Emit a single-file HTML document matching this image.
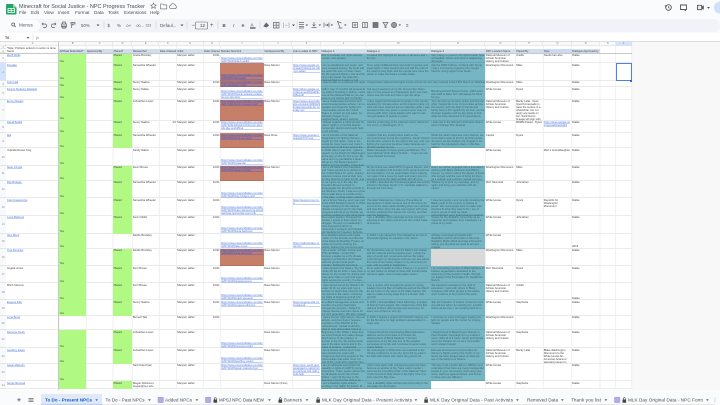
<!DOCTYPE html>
<html><head><meta charset="utf-8"><title>Minecraft for Social Justice - NPC Progress Tracker</title>
<style>
html,body{margin:0;padding:0;width:720px;height:405px;overflow:hidden;background:#f9fbfd;font-family:"Liberation Sans",sans-serif}
body{filter:blur(.3px)}
#sheet{position:absolute;left:0;top:42px;width:632px;height:348px;background:#fff}
#right{position:absolute;left:632px;top:42px;width:88px;height:348px;background:#f8f8f8}
#form{position:absolute;left:0;top:33px;width:720px;height:9px;background:#fff;border-bottom:.5px solid #ddd;box-sizing:border-box}
.r{position:absolute;left:0;width:631.7px;display:grid;grid-template-rows:100%;grid-template-columns:6.3px 52.7px 27.3px 26.7px 19.3px 27px 17.4px 27px 16.6px 43.4px 28.6px 28.7px 45.3px 64.4px 54.6px 30.4px 27.6px 28.4px 28.3px 15.7px 16px;box-shadow:inset 0 -1px 0 #eaeaea;font-size:2.7px;line-height:3px;color:#444}
.r>div{grid-row:1;overflow:hidden;padding:.6px .6px 0;box-sizing:border-box;height:100%;min-width:0}
.n{grid-column:1;text-align:center;color:#888;background:#f8f9fa;display:flex;align-items:center;justify-content:center;box-shadow:inset 0 -1px 0 #e4e4e4}
.A{grid-column:2}.B{grid-column:3}.C{grid-column:4}.D{grid-column:5}.E{grid-column:6}.F{grid-column:7;text-align:right}.G{grid-column:8}.H{grid-column:9;text-align:right}.I{grid-column:10}.J{grid-column:11}.K{grid-column:12}.L{grid-column:13}.M{grid-column:14}.N{grid-column:15}.O{grid-column:16}.P{grid-column:17}.Q{grid-column:18}.R{grid-column:19}.S{grid-column:20}.T{grid-column:21}
.g{background:#b0fa83}.t{background:#76b6c4;box-shadow:inset 0 -1px 0 rgba(40,90,100,.18)}.o{background:#c67f68;box-shadow:inset 0 -1px 0 rgba(90,50,30,.15)}.x{background:#d9d9d9}
.e{display:flex;align-items:flex-end;padding-bottom:.6px!important}
a{color:#4f78d8;text-decoration:none;word-break:break-all;background:repeating-linear-gradient(transparent 0,transparent 2.1px,rgba(110,140,225,.4) 2.1px,rgba(110,140,225,.4) 3px)}
.I a,.K a{display:block}
.o a{background:repeating-linear-gradient(rgba(125,115,195,.25) 0,rgba(125,115,195,.25) 2.1px,rgba(90,90,190,.45) 2.1px,rgba(90,90,190,.45) 3px);color:#3f55b5}
.t{color:#3c626b}
.l1,.l2,.l3,.l4,.l5,.l6{display:-webkit-box;-webkit-box-orient:vertical}
.l1{-webkit-line-clamp:1}.l2{-webkit-line-clamp:2}.l3{-webkit-line-clamp:3}.l4{-webkit-line-clamp:4}.l5{-webkit-line-clamp:5}.l6{-webkit-line-clamp:6}
.h{background:#cfdfee;display:flex;align-items:center;white-space:nowrap}
#cl{position:absolute;left:0;top:0;width:631.7px;height:4px;display:grid;grid-template-columns:6.3px 52.7px 27.3px 26.7px 19.3px 27px 17.4px 27px 16.6px 43.4px 28.6px 28.7px 45.3px 64.4px 54.6px 30.4px 27.6px 28.4px 28.3px 15.7px 16px;background:#f8f9fa;font-size:2.6px;line-height:4px;text-align:center;color:#777;box-shadow:inset 0 -.6px 0 #ddd}
#cl span{box-shadow:inset -.5px 0 0 #ddd}
#sel{position:absolute;left:615.7px;top:63.3px;width:16px;height:17.4px;border:.8px solid #4a80e8;box-sizing:border-box}
#hand{position:absolute;left:630.2px;top:79.6px;width:2.2px;height:2.2px;background:#2f63d8}
#fc{position:absolute;left:58.2px;top:42px;width:1px;height:348px;background:#c8c8c8}
#fr{position:absolute;left:0;top:52.9px;width:632px;height:1px;background:#c8c8c8}
svg{position:absolute;left:0;top:0}
#tabs{position:absolute;left:0;top:390px;width:720px;height:15px;background:#f9fbfd}
</style></head><body>
<div id="form"></div>
<div id="sheet"></div>
<div id="right"></div>
<svg width="720" height="405" style="top:0;z-index:1" fill="none"><path stroke="#ececec" stroke-width=".8" d="M59 46V390M86.3 46V390M113 46V390M132.3 46V390M159.3 46V390M176.7 46V390M203.7 46V390M220.3 46V390M263.7 46V390M292.3 46V390M321 46V390M366.3 46V390M430.7 46V390M485.3 46V390M515.7 46V390M543.3 46V390M571.7 46V390M600 46V390M615.7 46V390M631.7 42V390"/></svg>
<div style="position:absolute;left:0;top:42px;z-index:2;width:632px;height:4px"><div id="cl"><span></span><span>A</span><span>B</span><span>C</span><span>D</span><span>E</span><span>F</span><span>G</span><span>H</span><span>I</span><span>J</span><span>K</span><span>L</span><span>M</span><span>N</span><span>O</span><span>P</span><span>Q</span><span>R</span><span>S</span><span style="background:#d3e3fd">T</span></div></div>
<div style="position:absolute;left:0;top:0;z-index:2;width:632px;height:405px">
<div class="r" style="top:46px;height:3.3px;box-shadow:none"><div class="n">1</div><div class="A" style="white-space:nowrap">*Note: Problem actively no action is done</div></div>
<div class="r" style="top:49.3px;height:4px;box-shadow:none"><div class="n">2</div><div class="A">Name</div><div class="B h">All Data Submitted?</div><div class="C h">Approved By</div><div class="D h">Placed?</div><div class="E h">Researcher</div><div class="F h" style="text-align:left">Date Claimed</div><div class="G h">Artist</div><div class="H h" style="text-align:left">Date Claimed</div><div class="I h">Skindex Mod link</div><div class="J h">Vet/Approved By</div><div class="K h">Link to adapt to NPC</div><div class="L h">Dialogue 1</div><div class="M h">Dialogue 2</div><div class="N h">Dialogue 3</div><div class="O h">NPC Location Name</div><div class="P h">Placed By</div><div class="Q h" style="background:#c9daf8">Note</div><div class="R h">Dialogue Approved by</div></div>

<div class="r" style="top:53.3px;height:10px"><div class="n">3</div><div class="A"><a>Ida B Wells</a></div><div class="B g e">Yes</div><div class="D g">Placed</div><div class="E">Gretta Brockley</div><div class="G">Maryam Hafez</div><div class="H">10/21</div><div class="I e"><a>https://www.minecraftskins.com/skin/20711045/ida-b-wells/</a></div><div class="L t l2">She is [unclear] civil rights activist, mentor, and speaker.</div><div class="M t l1">I created first highlight for women in all lanes and in the city.</div><div class="N t l2">Very happy to present civil rights leader here at Freedom Center and what is happening at all people.</div><div class="O">National Museum of African American History and Culture</div><div class="P">Ariella</div><div class="Q">Needs hair also</div><div class="R">Dallas</div></div>

<div class="r" style="top:63.3px;height:17.4px"><div class="n" style="background:#d3e3fd">4</div><div class="A"><a>Douglas</a></div><div class="B g e">Yes</div><div class="D g">Placed</div><div class="E">Samantha Wheeler</div><div class="G">Maryam Hafez</div><div class="H"></div><div class="I o e"><a>https://www.minecraftskins.com/skin/20645213/douglas/</a></div><div class="J">Dave Mercer</div><div class="K"><a>https://www.google.com/search/dougl-as-mlk-npc-adapt</a></div><div class="L t l5">I am an abolitionist and orator, and once escaped slavery. My book told the world the story of what I lived. My life spanned slavery, war and the long road ahead. We walk this National Mall for freedom of all people in this land of ours and we stand.</div><div class="M t l4">From early childhood there was belief in justice and equal rights. I have fought hard and told the truth of the nation's long fight, and the people here have the power to make the dream a reality today.</div><div class="N t l3">Ask the 1960 hotlines, involved with Young of all a community organizer who fought hard for voting rights in the South.</div><div class="O">Washington Monument</div><div class="P">Miles</div><div class="R">Dallas</div></div>

<div class="r" style="top:80.7px;height:6.6px"><div class="n">5</div><div class="A"><a>John Hall</a></div><div class="B g e">Yes</div><div class="D g">Placed</div><div class="E">Sunny Nadine</div><div class="G">Maryam Hafez</div><div class="H">10/21</div><div class="I o"><a>https://www.minecraftskins.com/skin/20711045/john-hall/</a></div><div class="J">Dave Mercer</div><div class="L t" style="white-space:nowrap">I was founder of a national civil rights group in the South.</div><div class="M t" style="white-space:nowrap">I helped start national civil rights events across the South during the 1960s and we.</div><div class="N t" style="white-space:nowrap">I was involved in the 1963 March on Washington for Jobs.</div><div class="O">Washington Monument</div><div class="P">Miles</div><div class="R">Dallas</div></div>

<div class="r" style="top:87.3px;height:12.4px"><div class="n">6</div><div class="A"><a>Fannie Stokeley Edwards</a></div><div class="B g e">Yes</div><div class="D g">Placed</div><div class="E">Sunny Dallas</div><div class="G">Maryam Hafez</div><div class="H"></div><div class="I e"><a>https://www.minecraftskins.com/skin/20711045/fannie-stokeley-edwards-npc-skin-link/</a></div><div class="K"><a>https://docs.google.com/document/d/1a2b3c4d5e/edit</a></div><div class="L t l4">Hello I was 17 months old present at my sister's bombing in Selma. I work now at the National Mall so you can listen to our stories and my family's struggle for freedom.</div><div class="M t l3">Ask me [a question] of my life. Remember when I was 1 in the streets as it happened, and I now help others see the truth and how to get this done.</div><div class="N t e">Bombing at First Street Church, 1963 and it was hard to listen but I will always be there for you.</div><div class="O">White House</div><div class="P">Dyani</div><div class="R">Dallas</div></div>

<div class="r" style="top:99.7px;height:21px"><div class="n">7</div><div class="A"><a>Emmy Bustos</a></div><div class="B g e">Yes</div><div class="D g">Placed</div><div class="E">Johnathan Lopez</div><div class="G">Maryam Hafez</div><div class="H">10/21</div><div class="I o"><a>https://www.minecraftskins.com/skin/20712314/emmy-bustos-npc/</a></div><div class="J">Dave Mercer</div><div class="K"><a>https://www.minecraftskins.com/skin/18261234/national-guide-for-mlk-day-npc</a></div><div class="L t l6">I am a Guatemalan American and environmental justice activist. I am a speaker and organizer fighting for communities across the United States to protect air and water; my advocacy began in my neighborhood, where I saw the health effects of pollution. I want my community to breathe clean air and live full, safe, and long lives, and that is a right.</div><div class="M t l5">I have organized thousands of people in the country speaking for climate justice and immigrant rights; my work has been featured across national media. I was arrested at this very place in protest and I keep on moving with other young leaders who want to see a new generation of people in power.</div><div class="N t l5">You can look up my story online and find out what I helped do in our communities across the country, with the help of friends and family here in the capital city we love; we are stronger together and we are going to build what we have dreamed of for generations.</div><div class="O">National Museum of African American History and Culture</div><div class="P">Becky Lalal - Neon Used homemade to have the texture in a wheelchair; Do not apply any leads on her. Switched to lineage will sign with the mod</div><div class="R">Dallas</div></div>

<div class="r" style="top:120.7px;height:12.6px"><div class="n">8</div><div class="A"><a>Dandi Bobbit</a></div><div class="B g e">Yes</div><div class="D g">Placed</div><div class="E">Sunny Nadine</div><div class="F">1/1</div><div class="G">Maryam Hafez</div><div class="H">10/21</div><div class="I"><a>https://www.minecraftskins.com/skin/20712314/dandi-bobbit-npc-skin/mlk-day-world/final</a></div><div class="L t l4">I helped organize a national rally for voters' rights in a Central Atlantic Democratic district and fought hard in our schools.</div><div class="M t l2">I led the youth wing of the national march, March for Our Lives, in Washington, D.C.</div><div class="N t l2">I took part in the Women's Liberation Event and in Chicago Film Festival.</div><div class="O">White House</div><div class="P">BDMM Pastel - Dyani</div><div class="Q"><a>https://docs.google.com/spreadsheets/d/1</a></div><div class="R">Dallas</div></div>

<div class="r" style="top:133.3px;height:15px"><div class="n">9</div><div class="A"><a>Mia</a></div><div class="B g e">Yes</div><div class="D g">Placed</div><div class="E">Samantha Wheeler</div><div class="G">Maryam Hafez</div><div class="H">10/21</div><div class="I o"><a>https://www.minecraftskins.com/skin/20645213/mia-npc-skin/</a></div><div class="J">Dave Ross</div><div class="K"><a>https://www.youtube.com/watch?v=mia</a></div><div class="L t l4">I am a member of the National Organization for Ethical Women. I fought for civil rights; I was in the House for many years and I care for people here at all times across the state.</div><div class="M t l4">I believe that any social justice starts at the community level and at the neighbors. Cesar Chavez led the farm workers for the right to fair pay; and I am fighting for everyone we know today because we can do this together as one.</div><div class="N t l3">While the nation becomes more diverse, we know that in spite of all of it, and the people we serve we are divided, the struggle is still hard for the immigrant's place in this free nation.</div><div class="O">Capitol</div><div class="P">Dyani</div><div class="R">Dallas</div></div>

<div class="r" style="top:148.3px;height:17.4px"><div class="n">10</div><div class="A">Yolanda Renee King</div><div class="B g e">Yes</div><div class="E">Sandy Dalton</div><div class="G">Maryam Hafez</div><div class="I e"><a>https://www.minecraftskins.com/skin/20711045/yolanda/</a></div><div class="L t l5">In 2018, when I was nine, I gave a speech on the March for Washington at the age of nine for Our Lives. My name and my grandfather's dream will go on; the Dream Speech I believe in is for equality. I gave it as the 'I have a dream' one. I want a world of no guns.</div><div class="M t l3">Made messages to those great grandfathers. The next National Youth March To End ... I hope we can move forward tomorrow.</div><div class="O">White House</div><div class="Q">MLK's Granddaughter</div><div class="R">Dallas</div></div>

<div class="r" style="top:165.7px;height:15px"><div class="n">11</div><div class="A"><a>Sean Kringle</a></div><div class="B g e">Yes</div><div class="D g">Placed</div><div class="E">Kevin Bovee</div><div class="G">Maryam Hafez</div><div class="H">10/21</div><div class="I o"><a>https://www.minecraftskins.com/skin/20645213/sean-kringle/</a></div><div class="J">Dave Mercer</div><div class="L t l4">I am a US Marine from Maryland, and I have served as a veteran in the United States for years, helping veterans receive care at their homes as they deserve to have for life, and I stay at it.</div><div class="M t l4">My first book was called NPC Progress Report, and I am the president and founder of the group known as the Foundation. It is an organization that is helping our nation find a home for each and every one of our veterans and at the National Mall, with all of us today.</div><div class="N t l4">Now I am further engaged with a foundation working with Black Veterans and Military Forces; my work is about the dignity of those who served, and the cost of living for them; as a veteran and a citizen I speak out here.</div><div class="O">Washington Monument</div><div class="P">Miles</div><div class="R">Dallas</div></div>

<div class="r" style="top:180.7px;height:17.6px"><div class="n">12</div><div class="A"><a>Ray Bridges</a></div><div class="B g e">Yes</div><div class="D g">Placed</div><div class="E">Samantha Wheeler</div><div class="G">Maryam Hafez</div><div class="H">10/21</div><div class="I e"><a>https://www.minecraftskins.com/skin/20711045/ray-bridges-npc/</a></div><div class="L t l5">Hi, as I grew up in the day, the Freedom Movement took to desegregate the all-white schools in the Southern South. I was one of the first to walk alone to a white school in the state; a whole nation watched and saw me go through those doors, and I became an example for others to see. I went on to teach others.</div><div class="M t l2">In 1960, I attended the first desegregated elementary school in the Deep South; U.S. marshals walked me through the front door.</div><div class="N t l2">*Please try to print my message, and try again and bring your activities with all others*</div><div class="O">MLK Memorial</div><div class="P">Johnathan</div><div class="R">Dallas</div></div>

<div class="r" style="top:198.3px;height:17.4px"><div class="n">13</div><div class="A"><a>Caro Kasperczyk</a></div><div class="B g e">Yes</div><div class="D g">Placed</div><div class="E">Samantha Wheeler</div><div class="G">Maryam Hafez</div><div class="H">10/21</div><div class="I e"><a>https://www.minecraftskins.com/skin/20711045/caro-kasperczyk-skin/final-fixed-npc/version-two-mlk</a></div><div class="K"><a>https://support.npc.com</a></div><div class="L t l4">I am a former Marine, and I was part of the 2018 Parkland march. In 2018 I began working on the national climate movement and in the halls of Congress with all of my friends, we continue working to help all at home.</div><div class="M t l4">I founded National Gun Violence Prevention at Georgetown in 2018, became one of the first to do sit-ins at the state capitol building when we marched, and was there when the law was signed, with dozens of other students from across the country, and that was the beginning.</div><div class="N t l5">I have led events more recently involving the Black youth in the country in spaces of power. We need people here to make sure the laws fit what they want to fix; I am of course proud of what we have accomplished, and I look forward to leading us.</div><div class="O">White House</div><div class="P">Dyani</div><div class="Q">Republic for Washington Monument</div><div class="R">Dallas</div></div>

<div class="r" style="top:215.7px;height:18px"><div class="n">14</div><div class="A"><a>Lucia Bathurst</a></div><div class="B g e">Yes</div><div class="D g">Placed</div><div class="E">Kevin Molitz</div><div class="G">Maryam Hafez</div><div class="H">10/21</div><div class="I e"><a>https://www.minecraftskins.com/skin/20711045/lucia-bathurst/</a></div><div class="L t l5">As a Latino student, Protected for Justice, I speak to them about my struggle. Through my leadership, I have focused on all of my community's students and helped get Students for Freedom Schools from the streets of the state for families here with them and the children.</div><div class="M t l2">I am a disability rights advocate and an inclusion educator in the nation and all over the United States of America.</div><div class="N t l2">Known for the disability community as an organizer and speaker from Cleveland, I am proud of my work.</div><div class="O">White House</div><div class="P">Johnathan</div><div class="R">Dallas</div></div>

<div class="r" style="top:233.7px;height:15px"><div class="n">15</div><div class="A"><a>Alex Rona</a></div><div class="B g e">Yes</div><div class="E">Deidre Brockley</div><div class="G">Maryam Hafez</div><div class="I e"><a>https://www.minecraftskins.com/skin/20711045/alex-rona/</a></div><div class="K e"><a>https://national.alex.rona.com</a></div><div class="L t l4">As a disabled activist and media maker, I'm the founder and director of the National Disability Project, an online community sharing the stories, helping the community and sharing media and culture.</div><div class="M t l2">In 2020, I was named by Time Magazine as one of 16 people fighting for equality in the nation.</div><div class="N t l3">Actively encourage all people with disabilities and be advocates in the local Disability Rights Work and stay informed by voting; you are what we need to act and engage.</div><div class="O">White House</div><div class="R e">2019</div></div>

<div class="r" style="top:248.7px;height:17.3px"><div class="n">16</div><div class="A"><a>Tina Dominos</a></div><div class="B g e">Yes</div><div class="D g">Placed</div><div class="E">Deidre Brockley</div><div class="G">Maryam Hafez</div><div class="H">10/21</div><div class="I o"><a>https://www.minecraftskins.com/skin/20645213/tina-dominos/</a></div><div class="J">Dave Mercer</div><div class="L t l5">I am a writer, scholar, activist and PhD candidate. I wrote that I became a leader as a US climate organizer at Stanford, and helped start the group's local youth program; fighting for long-time National Archives of Women's leadership. Put an end to this and the world.</div><div class="M t l5">My dissertation was on how the Black Lives Matter and the national activist pipeline goes. I study the story of youth and movements across the nation. Look through my campaigns and you can see where the roots of our history began in my community this year, with my pride in Charleston.</div><div class="N x"></div><div class="O">Washington Monument</div><div class="P">Miles</div><div class="R">Dallas</div></div>

<div class="r" style="top:266px;height:17.3px"><div class="n">17</div><div class="A">Angela Jones</div><div class="B g e">Yes</div><div class="D g">Placed</div><div class="E">Kerri Bovee</div><div class="G">Maryam Hafez</div><div class="H">10/21</div><div class="I e"><a>https://www.minecraftskins.com/skin/20711045/angela-jones/</a></div><div class="J">Dave Mercer</div><div class="L t l5">I was named to the State's 'Top 30 Under 30' list for 2010. I have been a lawyer for the Center for Justice and have given talks on civil and equal rights across the country; I've been a public defender, I'm a writer, and my pieces are in the press all the time.</div><div class="M t l3">From police brutality to Ohio's Prisons, I'm proud of my law career on behalf of those with social justice, women's rights, and criminal justice reform.</div><div class="N t l3">I am a founding member of Black Mothers &amp; Fathers organization dedicated to the advancing of the people's health, through our legacy of the Foundation for Healthcare Reform.</div><div class="O">MLK Memorial</div><div class="P">Dyani</div><div class="R">Dallas</div></div>

<div class="r" style="top:283.3px;height:17px"><div class="n">18</div><div class="A">Mitch Stevens</div><div class="B g e">Yes</div><div class="D g">Placed</div><div class="E">Kerri Bovee</div><div class="G">Maryam Hafez</div><div class="H">10/21</div><div class="I e"><a>https://www.minecraftskins.com/skin/20711045/mitch-stevens/</a></div><div class="J">Dave Mercer</div><div class="L t l5">I was named one of the Nation's 40 under 40 for my work and I am a lecturer on topics that I lead for the city and all in the nation, including the State of Alabama and all who work for the rights of all people.</div><div class="M t l4">I am a mother who founded the group for young leaders from the Bay of California and led the March for our Lives on the steps of the State Capitol. We want to make a living wage that is a human right. We go forth.</div><div class="N t l4">We wanted to educate for the right to education. I work with others in Black Congress with other groups in the nation, and I continue to be proud of the work.</div><div class="O">National Museum of African American History and Culture</div><div class="P">Ariella</div><div class="R e">Dallas</div></div>

<div class="r" style="top:300.3px;height:15.4px"><div class="n">19</div><div class="A"><a>Eugene Ellis</a></div><div class="B g e">Yes</div><div class="D g">Placed</div><div class="E">Sunny Nadine</div><div class="G">Maryam Hafez</div><div class="H">10/21</div><div class="I"><a>https://www.minecraftskins.com/skin/20711045/eugene-ellis/npc</a></div><div class="J">Dave Mercer</div><div class="K"><a>https://eugene.ellis.com/national</a></div><div class="L t l4">As a Black transgender activist and founder of a group that helps transgender persons, I helped to change the law and open doors for the next generation. We also created programs here and in other states.</div><div class="M t l4">In 2015, I founded Black Trans Advocacy, a project of help for trans people. We created one of the first national hotlines offering help and resources, for every one of them in our city.</div><div class="N t l3">Join the Freedom of Justice movement and you will see what I am working for: a world where all are free; I am working hard for it.</div><div class="O">White House</div><div class="P">Stephanie</div><div class="R">Dallas</div></div>

<div class="r" style="top:315.7px;height:14.6px"><div class="n">20</div><div class="A"><a>Lena Bond</a></div><div class="E">Burnett Tate</div><div class="G">Maryam Hafez</div><div class="H">10/21</div><div class="L t l4">I was a human rights lawyer, then an activist, and from there I became president of the NAACP at the national level. I speak to all who want to hear about what I have to say for the next lives.</div><div class="M t l2">In 2016, I helped a project with NAACP, helping run for the first time for high political representation in a major way.</div><div class="N t l2">I continue my work and began leading the fight for people and the Center for Liberty Studies.</div><div class="O">Washington Monument</div><div class="R">Dallas</div></div>

<div class="r" style="top:330.3px;height:18px"><div class="n">21</div><div class="A"><a>Ramona Smith</a></div><div class="B g e">Yes</div><div class="D g">Placed</div><div class="E">Johnathan Lopez</div><div class="G">Maryam Hafez</div><div class="I e"><a>https://www.minecraftskins.com/skin/20711045/ramona-smith/</a></div><div class="J">Dave Mercer</div><div class="L t l5">Beginning in the 1950s, I knew that we must change and make change, which led us to the problem of women in the city. My earliest work was in the labor unions and in the rights of workers. I organized movements across the South and the fight has followed me since those years.</div><div class="M t l5">I helped found the Coordinating Black Education Alliance and a Committee to Promote the advancement of Black Students. The best experience of my life was one of the greatest successes of my life and I continue to serve today as I have before.</div><div class="N t l4">I helped found of Black Power Women in Poor Peoples' Campaign for my mother's name. With all of it came, family and friends came the hardest for me as a co-founder and it always helped.</div><div class="O">National Museum of African American History and Culture</div><div class="P">Stephanie</div><div class="R">Dallas</div></div>

<div class="r" style="top:348.3px;height:15.4px"><div class="n">22</div><div class="A"><a>Geoffrey Ewart</a></div><div class="B g e">Yes</div><div class="D g">Placed</div><div class="E">Johnathan Lopez</div><div class="G">Maryam Hafez</div><div class="I e"><a>https://www.minecraftskins.com/skin/20711045/geoffrey-ewart/</a></div><div class="J">Dave Mercer</div><div class="L t l4">I am a climate activist and I have been working for years with Indigenous and local peoples in the communities that suffer most. I'm a part of the youth who organize here.</div><div class="M t l3">My work began in 2016 when we marched to the climate conference in our city, and I did my part in the fight with others who share the goal for all.</div><div class="N t l4">Educate all America's Communities for Women's Rights and for the Youth; in my family we have always taken on what we see in the land of our fathers.</div><div class="O">National Museum of African American History and Culture</div><div class="P">Becky Lalal</div><div class="Q">Blake Washington Monument to the White House Ali-American Ariana or selected present in authenticity</div><div class="R">Dallas</div></div>

<div class="r" style="top:363.7px;height:17.6px"><div class="n">23</div><div class="A"><a>Gavin Malcolm</a></div><div class="B g e">Yes</div><div class="E">Sara Kate Ryan</div><div class="G">Maryam Hafez</div><div class="I"><a>https://www.minecraftskins.com/skin/20711045/gavin-malcolm/npc</a></div><div class="K"><a>https://gvm.youth.gov/press/gavin-malcolm/npc-national-mlk-mall-youth-help</a></div><div class="L t l5">I am an advocate and activist for equality in rights of LGBTQ young Americans. I have spoken about this for all people across the United States; I went all the way to the Supreme Court for the right to be myself, and now I run a group and a community. I fought.</div><div class="M t l4">I fell in love again with volunteering and now have become a member of the Trans Latino Center. I serve as the Founding Chair of the National Trans Youth Council to help others in the fight; I live in a town near the Bay Area.</div><div class="N t l4">The way to be a better ally to LGBTQ+ is to understand that there are many transgender people in your community; start using your voice, stand up against hatred, and be kind to those who are different.</div><div class="O">White House</div><div class="R">Dallas</div></div>

<div class="r" style="top:381.3px;height:8px"><div class="n">24</div><div class="A"><a>Sergio Beninati</a></div><div class="B g"></div><div class="D g">Placed</div><div class="E">Megan Roberson; megan@npc.edu</div><div class="G">Maryam Hafez</div><div class="J" style="white-space:nowrap">Dave Mercer (Fine)</div><div class="L t l2">I am a disability rights activist working in the nation for justice. My name is a nationwide civil rights organization.</div><div class="M t l2">I am a disability rights activist and community in the campaign for all peoples.</div><div class="O">White House</div><div class="P">Stephanie</div><div class="R">Dallas</div></div>
</div>

<div id="fc" style="z-index:3"></div>
<div id="fr" style="z-index:3"></div>
<div id="sel" style="z-index:4"></div>
<div id="hand" style="z-index:5"></div>
<div id="tabs" style="z-index:6"></div>

<svg width="720" height="405" style="z-index:7" font-family="'Liberation Sans',sans-serif" fill="none">
<!-- sheets logo -->
<path fill="#21a464" d="M7 4h6l3.5 3.5V13.5a1 1 0 0 1-1 1H7a1 1 0 0 1-1-1V5a1 1 0 0 1 1-1z"/>
<path fill="#8ed1b1" d="M13 4l3.5 3.5H13z"/>
<path stroke="#fff" stroke-width=".8" d="M8 8.5h6.5v4H8zM8 10.5h6.5M11.2 8.5v4"/>
<text x="19" y="7.8" font-size="5.5" fill="#4a4d50" textLength="126" lengthAdjust="spacing">Minecraft for Social Justice - NPC Progress Tracker</text>
<!-- title icons -->
<path stroke="#666" stroke-width=".6" d="M153.5 3l.8 1.9 2 .2-1.5 1.3.5 2-1.8-1.1-1.8 1.1.5-2-1.5-1.3 2-.2z"/>
<path stroke="#666" stroke-width=".6" d="M160.5 4h2.4l.9.9h3v4h-6.3z"/>
<path stroke="#666" stroke-width=".6" d="M171 8.6h4a1.6 1.6 0 0 0 .3-3.1 2.3 2.3 0 0 0-4.4-.4 1.8 1.8 0 0 0 .1 3.5z"/>
<g font-size="4.6" fill="#4a4d50">
<text x="19" y="14.2">File</text><text x="31" y="14.2">Edit</text><text x="44" y="14.2">View</text><text x="58" y="14.2">Insert</text><text x="75" y="14.2">Format</text><text x="94" y="14.2">Data</text><text x="108" y="14.2">Tools</text><text x="124" y="14.2">Extensions</text><text x="150" y="14.2">Help</text>
</g>
<!-- right icons -->
<circle cx="668.5" cy="7.5" r="2.8" stroke="#555" stroke-width=".9"/><path stroke="#555" stroke-width=".7" d="M668.5 6v1.6l1.2.7M665 5l.6 1.3 1.3-.4"/>
<path stroke="#555" stroke-width=".9" d="M680.5 5h6v4.5h-1v1l-1.3-1h-3.7z"/>
<path stroke="#555" stroke-width=".9" d="M697.5 5.3h4.2v4.4h-4.2z" fill="#eee"/><path fill="#555" d="M702 6.5l1.8-1.2v4.4L702 8.5zM707 7h3l-1.5 1.7z"/>
<circle cx="720" cy="7.5" r="6" fill="#cfe0fb"/>
<!-- toolbar -->
<rect x="7" y="19" width="713" height="13" rx="6.5" fill="#f0f4f9"/>
<rect x="7" y="19.5" width="33" height="12" rx="6" fill="#fbfcfe"/>
<circle cx="13.2" cy="24.5" r="1.5" stroke="#555" stroke-width=".7"/><path stroke="#555" stroke-width=".7" d="M14.3 25.6l1.5 1.5"/>
<text x="19" y="26.6" font-size="4.6" fill="#555">Menus</text>
<g stroke="#666" stroke-width=".7">
<path d="M42 24h3.5a2 2 0 0 1 0 3.6H43M42 24l1.3-1.2M42 24l1.3 1.2"/>
<path d="M56 24h-3.5a2 2 0 0 0 0 3.6H55M56 24l-1.3-1.2M56 24l-1.3 1.2"/>
<path d="M61.5 24h5v3h-5zM62.5 24v-2h3v2M62.5 26h3v2.2h-3z"/>
<path d="M71 22.5h4v1.5h-4zM73 24v1h-1.5v3"/>
<path d="M104 21.5v7M156 21.5v7M187 21.5v7M218 21.5v7M260 21.5v7M297 21.5v7" stroke="#ccc" stroke-width=".6"/>
<path d="M263.8 26.2l2.4-3.2 2.4 2.4-2.2 1.7z" fill="#666"/>
<path d="M273.5 22.5h5.5v5.5h-5.5zM273.5 25.2h5.5M276.2 22.5v5.5"/>
<path d="M283.5 22.5v5.5M289 22.5v5.5M285 25.2h2.5" stroke="#aaa"/>
<path d="M299 22.5h5M299 24.5h5M299 26.5h5M299 28h5"/>
<path d="M314 22v3.5M312.5 24.5l1.5 1.5 1.5-1.5M311.5 27.5h5"/>
<path d="M324 22.5v5M329 22.5v5M325 25h3M327 24l1.2 1-1.2 1"/>
<path d="M340 27.5l-2.5-6 4 1.5M338.5 28h4"/>
<path d="M352.5 22.5h5v5h-5zM355 23.5v3M353.5 25h3"/>
<path d="M362.5 22.5h5v5h-5zM364 24h2.2M364 26h2.2"/>
<path d="M373 22.5h5v5h-5z" fill="#777"/>
<path d="M383 22.5h5l-2 2.5v2.5h-1V25z"/>
<circle cx="394" cy="25" r="2.6" fill="#999"/>
</g>
<g font-size="4.4" fill="#555">
<text x="81" y="26.8">50%</text>
<text x="107.5" y="26.8">$</text>
<text x="117" y="26.8">%</text>
<text x="125.5" y="26.8" font-size="3.6">.0↵</text>
<text x="135.5" y="26.8" font-size="3.6">.00→</text>
<text x="145.5" y="26.6" font-size="3.4">123</text>
<text x="160" y="26.8">Defaul...</text>
<text x="191.5" y="27.2" font-size="6">−</text>
<text x="200" y="26.8" fill="#333">12</text>
<text x="210" y="27.2" font-size="6">+</text>
<text x="222.5" y="27" font-weight="bold">B</text>
<text x="233" y="27" font-style="italic" font-family="'Liberation Serif',serif">I</text>
<text x="241.5" y="27" text-decoration="line-through">S</text>
<text x="250.5" y="26.5" fill="#333">A</text>
<text x="406" y="27">Σ</text>
</g>
<rect x="195.5" y="22" width="12" height="7" rx="1" stroke="#666" stroke-width=".6"/>
<rect x="250" y="27.5" width="5.5" height="1" fill="#222"/>
<g fill="#555"><path d="M96.5 24.5h3l-1.5 1.7zM180.5 24.5h3l-1.5 1.7zM292 24.5h3l-1.5 1.7zM305.5 24.5h2.6l-1.3 1.5zM318.5 24.5h2.6l-1.3 1.5zM330.5 24.5h2.6l-1.3 1.5zM344 24.5h2.6l-1.3 1.5zM398.5 24.5h2.6l-1.3 1.5z"/></g>
<!-- formula bar -->
<text x="5" y="38.8" font-size="3.6" fill="#444" font-weight="bold">T6</text>
<path fill="#666" d="M26.5 37h3l-1.5 1.7z"/>
<path stroke="#ddd" stroke-width=".6" d="M33 34.5v6"/>
<text x="36" y="39" font-size="4.6" font-style="italic" fill="#888" font-family="'Liberation Serif',serif">fx</text>
<!-- tabs -->
<rect x="102" y="404" width="613" height=".8" fill="#e2e2e2"/>
<rect x="41" y="394" width="61" height="11" fill="#e1e9f7"/>
<rect x="41" y="403.8" width="61" height="1.2" fill="#c2d2ee"/>
<path stroke="#666" stroke-width=".8" d="M19 398v3.6M17.2 399.8h3.6"/>
<path stroke="#666" stroke-width=".8" d="M28.5 398.5h5M28.5 400h5M28.5 401.5h5"/>
<text x="45" y="401.4" font-size="4.5" font-weight="bold" fill="#0b57d0" textLength="47">To Do - Present NPCs</text>
<g font-size="4.6" fill="#4a4d50">
<text x="105.5" y="401.4" textLength="39">To Do - Past NPCs</text>
<text x="165" y="401.4" textLength="27">Added NPCs</text>
<text x="219" y="401.4" textLength="45">MPSJ NPC Data NEW</text>
<text x="284" y="401.4" textLength="18">Banners</text>
<text x="322" y="401.4" textLength="90">MLK Day Original Data - Present Activists</text>
<text x="430" y="401.4" textLength="83">MLK Day Original Data - Past Activists</text>
<text x="527" y="401.4" textLength="31">Removed Data</text>
<text x="571" y="401.4" textLength="30">Thank you list</text>
<text x="628" y="401.4" textLength="75">MLK Day Original Data - NPC Form</text>
</g>
<path fill="#0b57d0" d="M95.2 399.4h2.8l-1.4 1.5z"/>
<g fill="#444"><path d="M148 399.4h2.8l-1.4 1.5zM195.5 399.4h2.8l-1.4 1.5zM268 399.4h2.8l-1.4 1.5zM305.5 399.4h2.8l-1.4 1.5zM414.5 399.4h2.8l-1.4 1.5zM516 399.4h2.8l-1.4 1.5zM561 399.4h2.8l-1.4 1.5zM604.5 399.4h2.8l-1.4 1.5zM706 399.4h2.8l-1.4 1.5z"/></g>
<g fill="#b9a8ea" stroke="#8f7fd6" stroke-width=".4"><rect x="158" y="397.2" width="5.4" height="5.4" rx=".6"/><rect x="205.5" y="397.2" width="5.4" height="5.4" rx=".6"/><rect x="614.5" y="397.2" width="5.4" height="5.4" rx=".6"/></g>
<g fill="#444"><path d="M213.5 399.5h3.6v3.3h-3.6zM278.5 399.5h3.6v3.3h-3.6zM316.3 399.5h3.6v3.3h-3.6zM424.3 399.5h3.6v3.3h-3.6zM622.5 399.5h3.6v3.3h-3.6z"/></g>
<g stroke="#444" stroke-width=".6"><path d="M214.3 399.5v-.8a1 1 0 0 1 2 0v.8M279.3 399.5v-.8a1 1 0 0 1 2 0v.8M317.1 399.5v-.8a1 1 0 0 1 2 0v.8M425.1 399.5v-.8a1 1 0 0 1 2 0v.8M623.3 399.5v-.8a1 1 0 0 1 2 0v.8"/></g>
<path stroke="#ccc" stroke-width=".6" d="M715 397v6"/>
</svg>
</body></html>
